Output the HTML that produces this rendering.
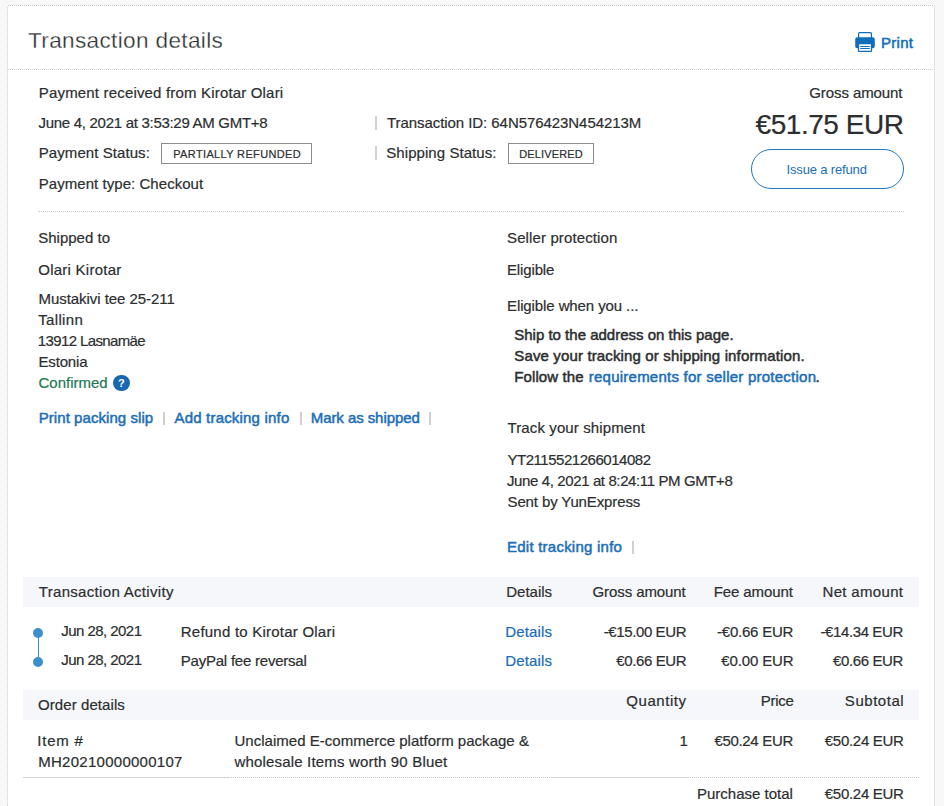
<!DOCTYPE html>
<html><head><meta charset="utf-8">
<style>
html,body{margin:0;padding:0;}
body{width:944px;height:806px;overflow:hidden;background:#f8f8f8;font-family:"Liberation Sans",sans-serif;color:#2c2e2f;position:relative;}
.card{position:absolute;left:7px;top:5px;width:926px;height:900px;background:#fff;border:1px dotted #c6c6c6;border-radius:3px;}
.t{position:absolute;line-height:1;white-space:nowrap;}
.hr{position:absolute;height:0;border-top:1px dotted #cfcfcf;}
.band{position:absolute;left:23px;width:896px;height:30px;background:#f5f7fa;}
.badge{position:absolute;border:1px solid #8c8c8c;height:21px;box-sizing:border-box;}
.sep{position:absolute;width:2px;background:#cdd0d4;}
.dot{position:absolute;width:10px;height:10px;border-radius:50%;background:#3d8fcb;}


.mk{display:inline-block;width:0;height:0;}
</style></head><body>
<div class="card"></div>
<svg style="position:absolute;left:855px;top:32px" width="20" height="20" viewBox="0 0 20 20">
  <rect x="3.6" y="0.6" width="12.8" height="7" rx="0.9" fill="#fff" stroke="#0f6db9" stroke-width="1.2"/>
  <rect x="0.2" y="5.2" width="19.6" height="11" rx="2.2" fill="#0f6db9"/>
  <rect x="3.5" y="11.6" width="13" height="7.8" rx="0.9" fill="#fff" stroke="#0f6db9" stroke-width="1.3"/>
  <rect x="5.2" y="14" width="9.6" height="1" fill="#0f6db9"/>
  <rect x="5.2" y="16" width="9.6" height="1" fill="#0f6db9"/>
</svg>
<div class="hr" style="left:8px;width:925px;top:69px;"></div>
<div class="badge" style="left:161px;top:143px;width:151px;"></div>
<div class="sep" style="left:375px;top:116px;height:14px;"></div>
<div class="sep" style="left:375px;top:146px;height:14px;"></div>
<div class="badge" style="left:508px;top:143px;width:86px;"></div>
<div style="position:absolute;left:751px;top:149px;width:153px;height:40px;box-sizing:border-box;border:1px solid #1f77bf;border-radius:20px;"></div>
<div class="hr" style="left:38px;width:866px;top:211px;"></div>
<div style="position:absolute;left:113px;top:374.5px;width:16.5px;height:16px;border-radius:50%;background:#1867b1;color:#fff;font-size:11px;font-weight:bold;line-height:16px;text-align:center;">?</div>
<div class="sep" style="left:163px;top:412px;height:13px;"></div>
<div class="sep" style="left:300px;top:412px;height:13px;"></div>
<div class="sep" style="left:429px;top:412px;height:13px;"></div>
<div class="sep" style="left:632px;top:541px;height:13px;"></div>
<div class="band" style="top:577px;"></div>
<div class="dot" style="left:33px;top:627.5px;"></div>
<div class="dot" style="left:33px;top:656.5px;"></div>
<div style="position:absolute;left:37.5px;top:632px;width:1px;height:29px;background:#3d8fcb;"></div>
<div class="band" style="top:690px;"></div>
<div style="position:absolute;left:23px;top:777px;width:207px;height:1px;background:#d3d3d3;"></div>
<div class="hr" style="left:231px;width:321px;top:777px;"></div>
<div style="position:absolute;left:552px;top:777px;width:136px;height:1px;background:#d3d3d3;"></div>
<div class="hr" style="left:688px;width:231px;top:777px;"></div>
<div class="t" style="left:28.00px;top:30.00px;font-size:22.6px;-webkit-text-stroke:0.3px #fff;letter-spacing:0.333px;color:#2c2e2f;">Transaction details</div>
<div class="t" style="left:881.00px;top:35.00px;font-size:15px;-webkit-text-stroke:0.5px #0f6db9;letter-spacing:0.300px;color:#0f6db9;">Print</div>
<div class="t" style="left:38.75px;top:85.00px;font-size:15px;-webkit-text-stroke:0.2px #2c2e2f;letter-spacing:0.176px;color:#2c2e2f;">Payment received from Kirotar Olari</div>
<div class="t" style="left:38.50px;top:115.00px;font-size:15px;-webkit-text-stroke:0.2px #2c2e2f;letter-spacing:-0.290px;color:#2c2e2f;">June 4, 2021 at 3:53:29 AM GMT+8</div>
<div class="t" style="left:38.75px;top:145.00px;font-size:15px;-webkit-text-stroke:0.2px #2c2e2f;letter-spacing:0.071px;color:#2c2e2f;">Payment Status:</div>
<div class="t" style="left:173.25px;top:149.01px;font-size:11px;-webkit-text-stroke:0.2px #2c2e2f;letter-spacing:0.353px;color:#2c2e2f;">PARTIALLY REFUNDED</div>
<div class="t" style="left:38.75px;top:176.00px;font-size:15px;-webkit-text-stroke:0.2px #2c2e2f;letter-spacing:0.048px;color:#2c2e2f;">Payment type: Checkout</div>
<div class="t" style="left:387.00px;top:115.00px;font-size:15px;-webkit-text-stroke:0.2px #2c2e2f;letter-spacing:-0.062px;color:#2c2e2f;">Transaction ID: 64N576423N454213M</div>
<div class="t" style="left:386.25px;top:145.00px;font-size:15px;-webkit-text-stroke:0.2px #2c2e2f;letter-spacing:0.067px;color:#2c2e2f;">Shipping Status:</div>
<div class="t" style="left:519.25px;top:149.01px;font-size:11px;-webkit-text-stroke:0.2px #2c2e2f;letter-spacing:0.125px;color:#2c2e2f;">DELIVERED</div>
<div class="t" style="left:809.25px;top:85.00px;font-size:15px;-webkit-text-stroke:0.2px #2c2e2f;letter-spacing:-0.091px;color:#2c2e2f;">Gross amount</div>
<div class="t" style="left:755.50px;top:111.01px;font-size:28px;-webkit-text-stroke:0.2px #2c2e2f;letter-spacing:-0.444px;color:#2c2e2f;">€51.75 EUR</div>
<div class="t" style="left:786.50px;top:163.01px;font-size:13px;letter-spacing:-0.154px;color:#1a6fb8;">Issue a refund</div>
<div class="t" style="left:38.25px;top:230.00px;font-size:15px;-webkit-text-stroke:0.2px #2c2e2f;color:#2c2e2f;">Shipped to</div>
<div class="t" style="left:38.25px;top:262.00px;font-size:15px;-webkit-text-stroke:0.2px #2c2e2f;letter-spacing:0.250px;color:#2c2e2f;">Olari Kirotar</div>
<div class="t" style="left:38.50px;top:291.00px;font-size:15px;-webkit-text-stroke:0.2px #2c2e2f;letter-spacing:-0.053px;color:#2c2e2f;">Mustakivi tee 25-211</div>
<div class="t" style="left:38.25px;top:312.00px;font-size:15px;-webkit-text-stroke:0.2px #2c2e2f;letter-spacing:0.333px;color:#2c2e2f;">Tallinn</div>
<div class="t" style="left:37.75px;top:333.00px;font-size:15px;-webkit-text-stroke:0.2px #2c2e2f;letter-spacing:-0.615px;color:#2c2e2f;">13912 Lasnamäe</div>
<div class="t" style="left:38.50px;top:354.00px;font-size:15px;-webkit-text-stroke:0.2px #2c2e2f;letter-spacing:-0.167px;color:#2c2e2f;">Estonia</div>
<div class="t" style="left:38.50px;top:375.00px;font-size:15px;-webkit-text-stroke:0.2px #1d7756;color:#1d7756;">Confirmed</div>
<div class="t" style="left:38.75px;top:410.00px;font-size:15px;-webkit-text-stroke:0.5px #1c6eb6;letter-spacing:0.059px;color:#1c6eb6;">Print packing slip</div>
<div class="t" style="left:174.50px;top:410.00px;font-size:15px;-webkit-text-stroke:0.5px #1c6eb6;letter-spacing:0.188px;color:#1c6eb6;">Add tracking info</div>
<div class="t" style="left:310.75px;top:410.00px;font-size:15px;-webkit-text-stroke:0.5px #1c6eb6;letter-spacing:-0.071px;color:#1c6eb6;">Mark as shipped</div>
<div class="t" style="left:507.00px;top:230.00px;font-size:15px;-webkit-text-stroke:0.2px #2c2e2f;letter-spacing:0.125px;color:#2c2e2f;">Seller protection</div>
<div class="t" style="left:507.00px;top:262.00px;font-size:15px;-webkit-text-stroke:0.2px #2c2e2f;letter-spacing:-0.143px;color:#2c2e2f;">Eligible</div>
<div class="t" style="left:507.00px;top:298.00px;font-size:15px;-webkit-text-stroke:0.2px #2c2e2f;letter-spacing:-0.100px;color:#2c2e2f;">Eligible when you ...</div>
<div class="t" style="left:514.25px;top:327.00px;font-size:15px;-webkit-text-stroke:0.5px #2c2e2f;color:#2c2e2f;">Ship to the address on this page.</div>
<div class="t" style="left:514.25px;top:348.00px;font-size:15px;-webkit-text-stroke:0.5px #2c2e2f;letter-spacing:0.143px;color:#2c2e2f;">Save your tracking or shipping information.</div>
<div class="t" style="left:514.25px;top:369.00px;font-size:15px;-webkit-text-stroke:0.5px #2c2e2f;letter-spacing:0.111px;color:#2c2e2f;">Follow the</div>
<div class="t" style="left:588.75px;top:369.00px;font-size:15px;-webkit-text-stroke:0.5px #1a6db5;letter-spacing:0.242px;color:#1a6db5;">requirements for seller protection</div>
<div class="t" style="left:815.50px;top:369.00px;font-size:15px;-webkit-text-stroke:0.5px #2c2e2f;color:#2c2e2f;">.</div>
<div class="t" style="left:507.50px;top:420.00px;font-size:15px;-webkit-text-stroke:0.2px #2c2e2f;letter-spacing:0.111px;color:#2c2e2f;">Track your shipment</div>
<div class="t" style="left:507.50px;top:452.00px;font-size:15px;-webkit-text-stroke:0.2px #2c2e2f;letter-spacing:-0.471px;color:#2c2e2f;">YT2115521266014082</div>
<div class="t" style="left:507.00px;top:473.00px;font-size:15px;-webkit-text-stroke:0.2px #2c2e2f;letter-spacing:-0.387px;color:#2c2e2f;">June 4, 2021 at 8:24:11 PM GMT+8</div>
<div class="t" style="left:507.50px;top:494.00px;font-size:15px;-webkit-text-stroke:0.2px #2c2e2f;letter-spacing:-0.118px;color:#2c2e2f;">Sent by YunExpress</div>
<div class="t" style="left:507.00px;top:539.00px;font-size:15px;-webkit-text-stroke:0.5px #1c6eb6;letter-spacing:0.235px;color:#1c6eb6;">Edit tracking info</div>
<div class="t" style="left:38.75px;top:584.00px;font-size:15px;-webkit-text-stroke:0.2px #2c2e2f;letter-spacing:0.316px;color:#2c2e2f;">Transaction Activity</div>
<div class="t" style="left:506.25px;top:584.00px;font-size:15px;-webkit-text-stroke:0.2px #2c2e2f;color:#2c2e2f;">Details</div>
<div class="t" style="left:592.50px;top:584.00px;font-size:15px;-webkit-text-stroke:0.2px #2c2e2f;letter-spacing:-0.091px;color:#2c2e2f;">Gross amount</div>
<div class="t" style="left:713.75px;top:584.00px;font-size:15px;-webkit-text-stroke:0.2px #2c2e2f;letter-spacing:-0.111px;color:#2c2e2f;">Fee amount</div>
<div class="t" style="left:822.50px;top:584.00px;font-size:15px;-webkit-text-stroke:0.2px #2c2e2f;letter-spacing:0.333px;color:#2c2e2f;">Net amount</div>
<div class="t" style="left:61.25px;top:623.00px;font-size:15px;-webkit-text-stroke:0.2px #2c2e2f;letter-spacing:-0.545px;color:#2c2e2f;">Jun 28, 2021</div>
<div class="t" style="left:180.75px;top:624.00px;font-size:15px;-webkit-text-stroke:0.2px #2c2e2f;letter-spacing:0.227px;color:#2c2e2f;">Refund to Kirotar Olari</div>
<div class="t" style="left:505.25px;top:624.00px;font-size:15px;-webkit-text-stroke:0.2px #1a6db5;letter-spacing:0.167px;color:#1a6db5;">Details</div>
<div class="t" style="left:603.75px;top:624.00px;font-size:15px;-webkit-text-stroke:0.2px #2c2e2f;letter-spacing:-0.400px;color:#2c2e2f;">-€15.00 EUR</div>
<div class="t" style="left:717.00px;top:624.00px;font-size:15px;-webkit-text-stroke:0.2px #2c2e2f;letter-spacing:-0.222px;color:#2c2e2f;">-€0.66 EUR</div>
<div class="t" style="left:820.50px;top:624.00px;font-size:15px;-webkit-text-stroke:0.2px #2c2e2f;letter-spacing:-0.400px;color:#2c2e2f;">-€14.34 EUR</div>
<div class="t" style="left:61.25px;top:652.00px;font-size:15px;-webkit-text-stroke:0.2px #2c2e2f;letter-spacing:-0.545px;color:#2c2e2f;">Jun 28, 2021</div>
<div class="t" style="left:180.75px;top:653.00px;font-size:15px;-webkit-text-stroke:0.2px #2c2e2f;letter-spacing:-0.222px;color:#2c2e2f;">PayPal fee reversal</div>
<div class="t" style="left:505.25px;top:653.00px;font-size:15px;-webkit-text-stroke:0.2px #1a6db5;letter-spacing:0.167px;color:#1a6db5;">Details</div>
<div class="t" style="left:616.25px;top:653.00px;font-size:15px;-webkit-text-stroke:0.2px #2c2e2f;letter-spacing:-0.375px;color:#2c2e2f;">€0.66 EUR</div>
<div class="t" style="left:721.25px;top:653.00px;font-size:15px;-webkit-text-stroke:0.2px #2c2e2f;letter-spacing:-0.125px;color:#2c2e2f;">€0.00 EUR</div>
<div class="t" style="left:833.00px;top:653.00px;font-size:15px;-webkit-text-stroke:0.2px #2c2e2f;letter-spacing:-0.375px;color:#2c2e2f;">€0.66 EUR</div>
<div class="t" style="left:38.00px;top:697.00px;font-size:15px;-webkit-text-stroke:0.2px #2c2e2f;letter-spacing:0.083px;color:#2c2e2f;">Order details</div>
<div class="t" style="left:626.25px;top:693.00px;font-size:15px;-webkit-text-stroke:0.2px #2c2e2f;letter-spacing:0.571px;color:#2c2e2f;">Quantity</div>
<div class="t" style="left:760.75px;top:693.00px;font-size:15px;-webkit-text-stroke:0.2px #2c2e2f;letter-spacing:-0.250px;color:#2c2e2f;">Price</div>
<div class="t" style="left:844.85px;top:693.00px;font-size:15px;-webkit-text-stroke:0.2px #2c2e2f;letter-spacing:0.543px;color:#2c2e2f;">Subtotal</div>
<div class="t" style="left:37.25px;top:733.00px;font-size:15px;-webkit-text-stroke:0.2px #2c2e2f;letter-spacing:0.800px;color:#2c2e2f;">Item #</div>
<div class="t" style="left:38.25px;top:754.00px;font-size:15px;-webkit-text-stroke:0.2px #2c2e2f;letter-spacing:0.267px;color:#2c2e2f;">MH20210000000107</div>
<div class="t" style="left:234.50px;top:733.00px;font-size:15px;-webkit-text-stroke:0.2px #2c2e2f;letter-spacing:0.026px;color:#2c2e2f;">Unclaimed E-commerce platform package &amp;</div>
<div class="t" style="left:234.50px;top:754.00px;font-size:15px;-webkit-text-stroke:0.2px #2c2e2f;letter-spacing:0.172px;color:#2c2e2f;">wholesale Items worth 90 Bluet</div>
<div class="t" style="left:679.50px;top:733.00px;font-size:15px;-webkit-text-stroke:0.2px #2c2e2f;color:#2c2e2f;">1</div>
<div class="t" style="left:714.50px;top:733.00px;font-size:15px;-webkit-text-stroke:0.2px #2c2e2f;letter-spacing:-0.333px;color:#2c2e2f;">€50.24 EUR</div>
<div class="t" style="left:824.80px;top:733.00px;font-size:15px;-webkit-text-stroke:0.2px #2c2e2f;letter-spacing:-0.289px;color:#2c2e2f;">€50.24 EUR</div>
<div class="t" style="left:697.00px;top:786.00px;font-size:15px;-webkit-text-stroke:0.2px #2c2e2f;color:#2c2e2f;">Purchase total</div>
<div class="t" style="left:824.80px;top:786.00px;font-size:15px;-webkit-text-stroke:0.2px #2c2e2f;letter-spacing:-0.289px;color:#2c2e2f;">€50.24 EUR</div>
</body></html>
